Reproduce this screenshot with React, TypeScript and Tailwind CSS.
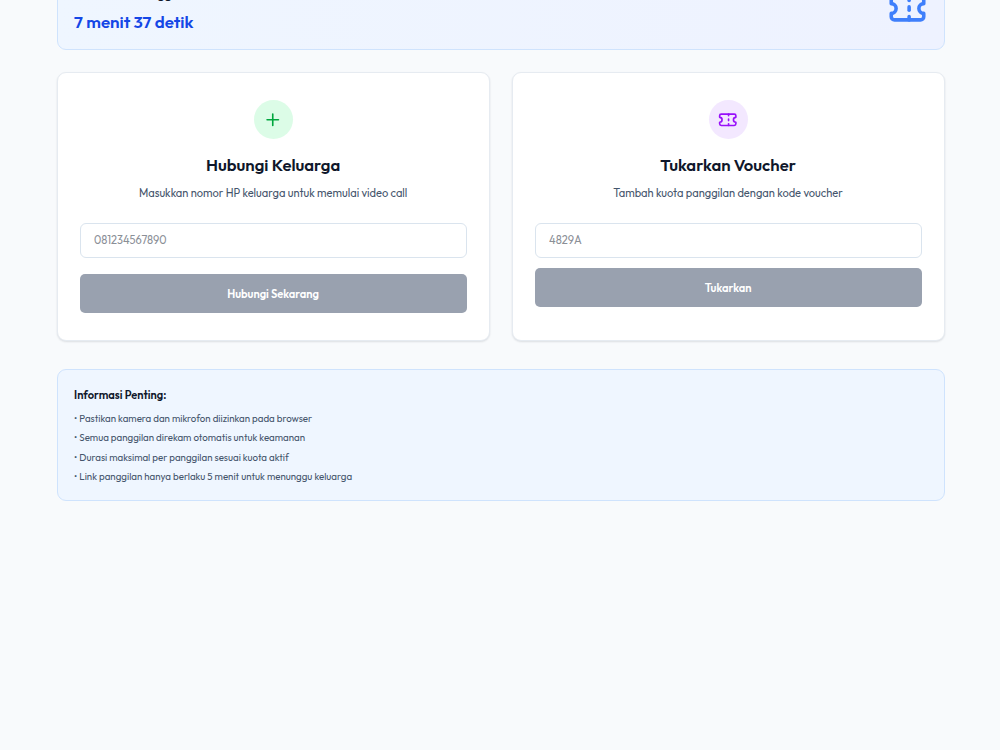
import React from "react";
import { Plus, Ticket } from "lucide-react";


interface ActionCardProps {
    icon: React.ReactNode;
    iconClassName: string;
    title: string;
    description: string;
    placeholder: string;
    buttonText: string;
    gapClassName: string;
}


const informationList: string[] = [
    "Pastikan kamera dan mikrofon diizinkan pada browser",
    "Semua panggilan direkam otomatis untuk keamanan",
    "Durasi maksimal per panggilan sesuai kuota aktif",
    "Link panggilan hanya berlaku 5 menit untuk menunggu keluarga",
];


function QuotaBanner(){
    return (
        <div className="flex h-[101px] items-center justify-between rounded-[9px] border border-[#cfe3fd] bg-linear-to-r from-[#eff6ff] to-[#eef2ff] pr-[17px] pl-[16.5px]">
            <div className="pt-[19px]">
                <p className="mb-[5px] text-[12.5px] leading-5 font-semibold text-[#0f172b]">
                    Sisa Kuota Panggilan
                </p>
                <p className="text-[16.9px] leading-[26px] font-semibold whitespace-nowrap text-[#1447e6]">
                    7 menit 37 detik
                </p>
            </div>
            <Ticket className="mt-[18px] size-[39px] text-[#3f7ffb]" strokeWidth={2.2} />
        </div>
    );
}


function ActionCard(props: ActionCardProps){
    return (
        <div className="flex h-[269.4px] flex-col rounded-[9px] border border-[#e6ebf1] bg-white px-[22px] pt-[27.2px] shadow-[0_1px_2px_rgba(15,23,43,0.12)]">

            <div className={`mx-auto flex size-[39px] shrink-0 items-center justify-center rounded-full ${props.iconClassName}`}>
                {props.icon}
            </div>

            <h3 className="mt-[13.8px] text-center text-[16.65px] leading-6 font-semibold text-[#0f172b]">
                {props.title}
            </h3>
            <p className="mt-2 text-center text-[11.1px] leading-4 whitespace-nowrap text-[#45556c]">
                {props.description}
            </p>

            <div className={`mt-[22px] flex flex-col ${props.gapClassName}`}>
                <input
                    type="text"
                    placeholder={props.placeholder}
                    className="h-[35px] w-full rounded-md border border-[#dae4ee] bg-white px-[13.5px] text-[11.1px] placeholder:text-[#8b8f97]"
                />
                <button
                    type="button"
                    disabled
                    className="h-[39px] w-full rounded-[5px] bg-[#99a1af] pt-px text-[11.1px] font-semibold text-white"
                >
                    {props.buttonText}
                </button>
            </div>

        </div>
    );
}


function App(){
    return (
        <div className="h-[750px] overflow-hidden bg-[#f8fafc] pl-[56.6px] font-['Outfit','Lato',sans-serif]">
            <main className="-mt-[51px] w-[888px]">

                <QuotaBanner />

                <div className="mt-[22px] grid grid-cols-2 gap-[22px]">
                    <ActionCard
                        icon={<Plus className="size-[19.5px] text-[#00a63e]" />}
                        iconClassName="bg-[#dcfce7]"
                        title="Hubungi Keluarga"
                        description="Masukkan nomor HP keluarga untuk memulai video call"
                        placeholder="081234567890"
                        buttonText="Hubungi Sekarang"
                        gapClassName="gap-4"
                    />
                    <ActionCard
                        icon={<Ticket className="size-[19.5px] text-[#9810fa]" />}
                        iconClassName="bg-[#f3e8ff]"
                        title="Tukarkan Voucher"
                        description="Tambah kuota panggilan dengan kode voucher"
                        placeholder="4829A"
                        buttonText="Tukarkan"
                        gapClassName="gap-[10.4px]"
                    />
                </div>

                <div className="mt-[27.6px] h-[132px] rounded-[9px] border border-[#cfe3fd] bg-[#eff6ff] pt-[17px] pl-[16.5px]">
                    <h4 className="text-[11.1px] leading-4 font-semibold text-[#0f172b]">
                        Informasi Penting:
                    </h4>
                    <ul className="mt-[6px] text-[9.73px] leading-[19.4px] text-[#45556c]">
                        {informationList.map((item) => (
                            <li key={item} className="whitespace-nowrap">
                                • {item}
                            </li>
                        ))}
                    </ul>
                </div>

            </main>
        </div>
    );
}


export default App;
